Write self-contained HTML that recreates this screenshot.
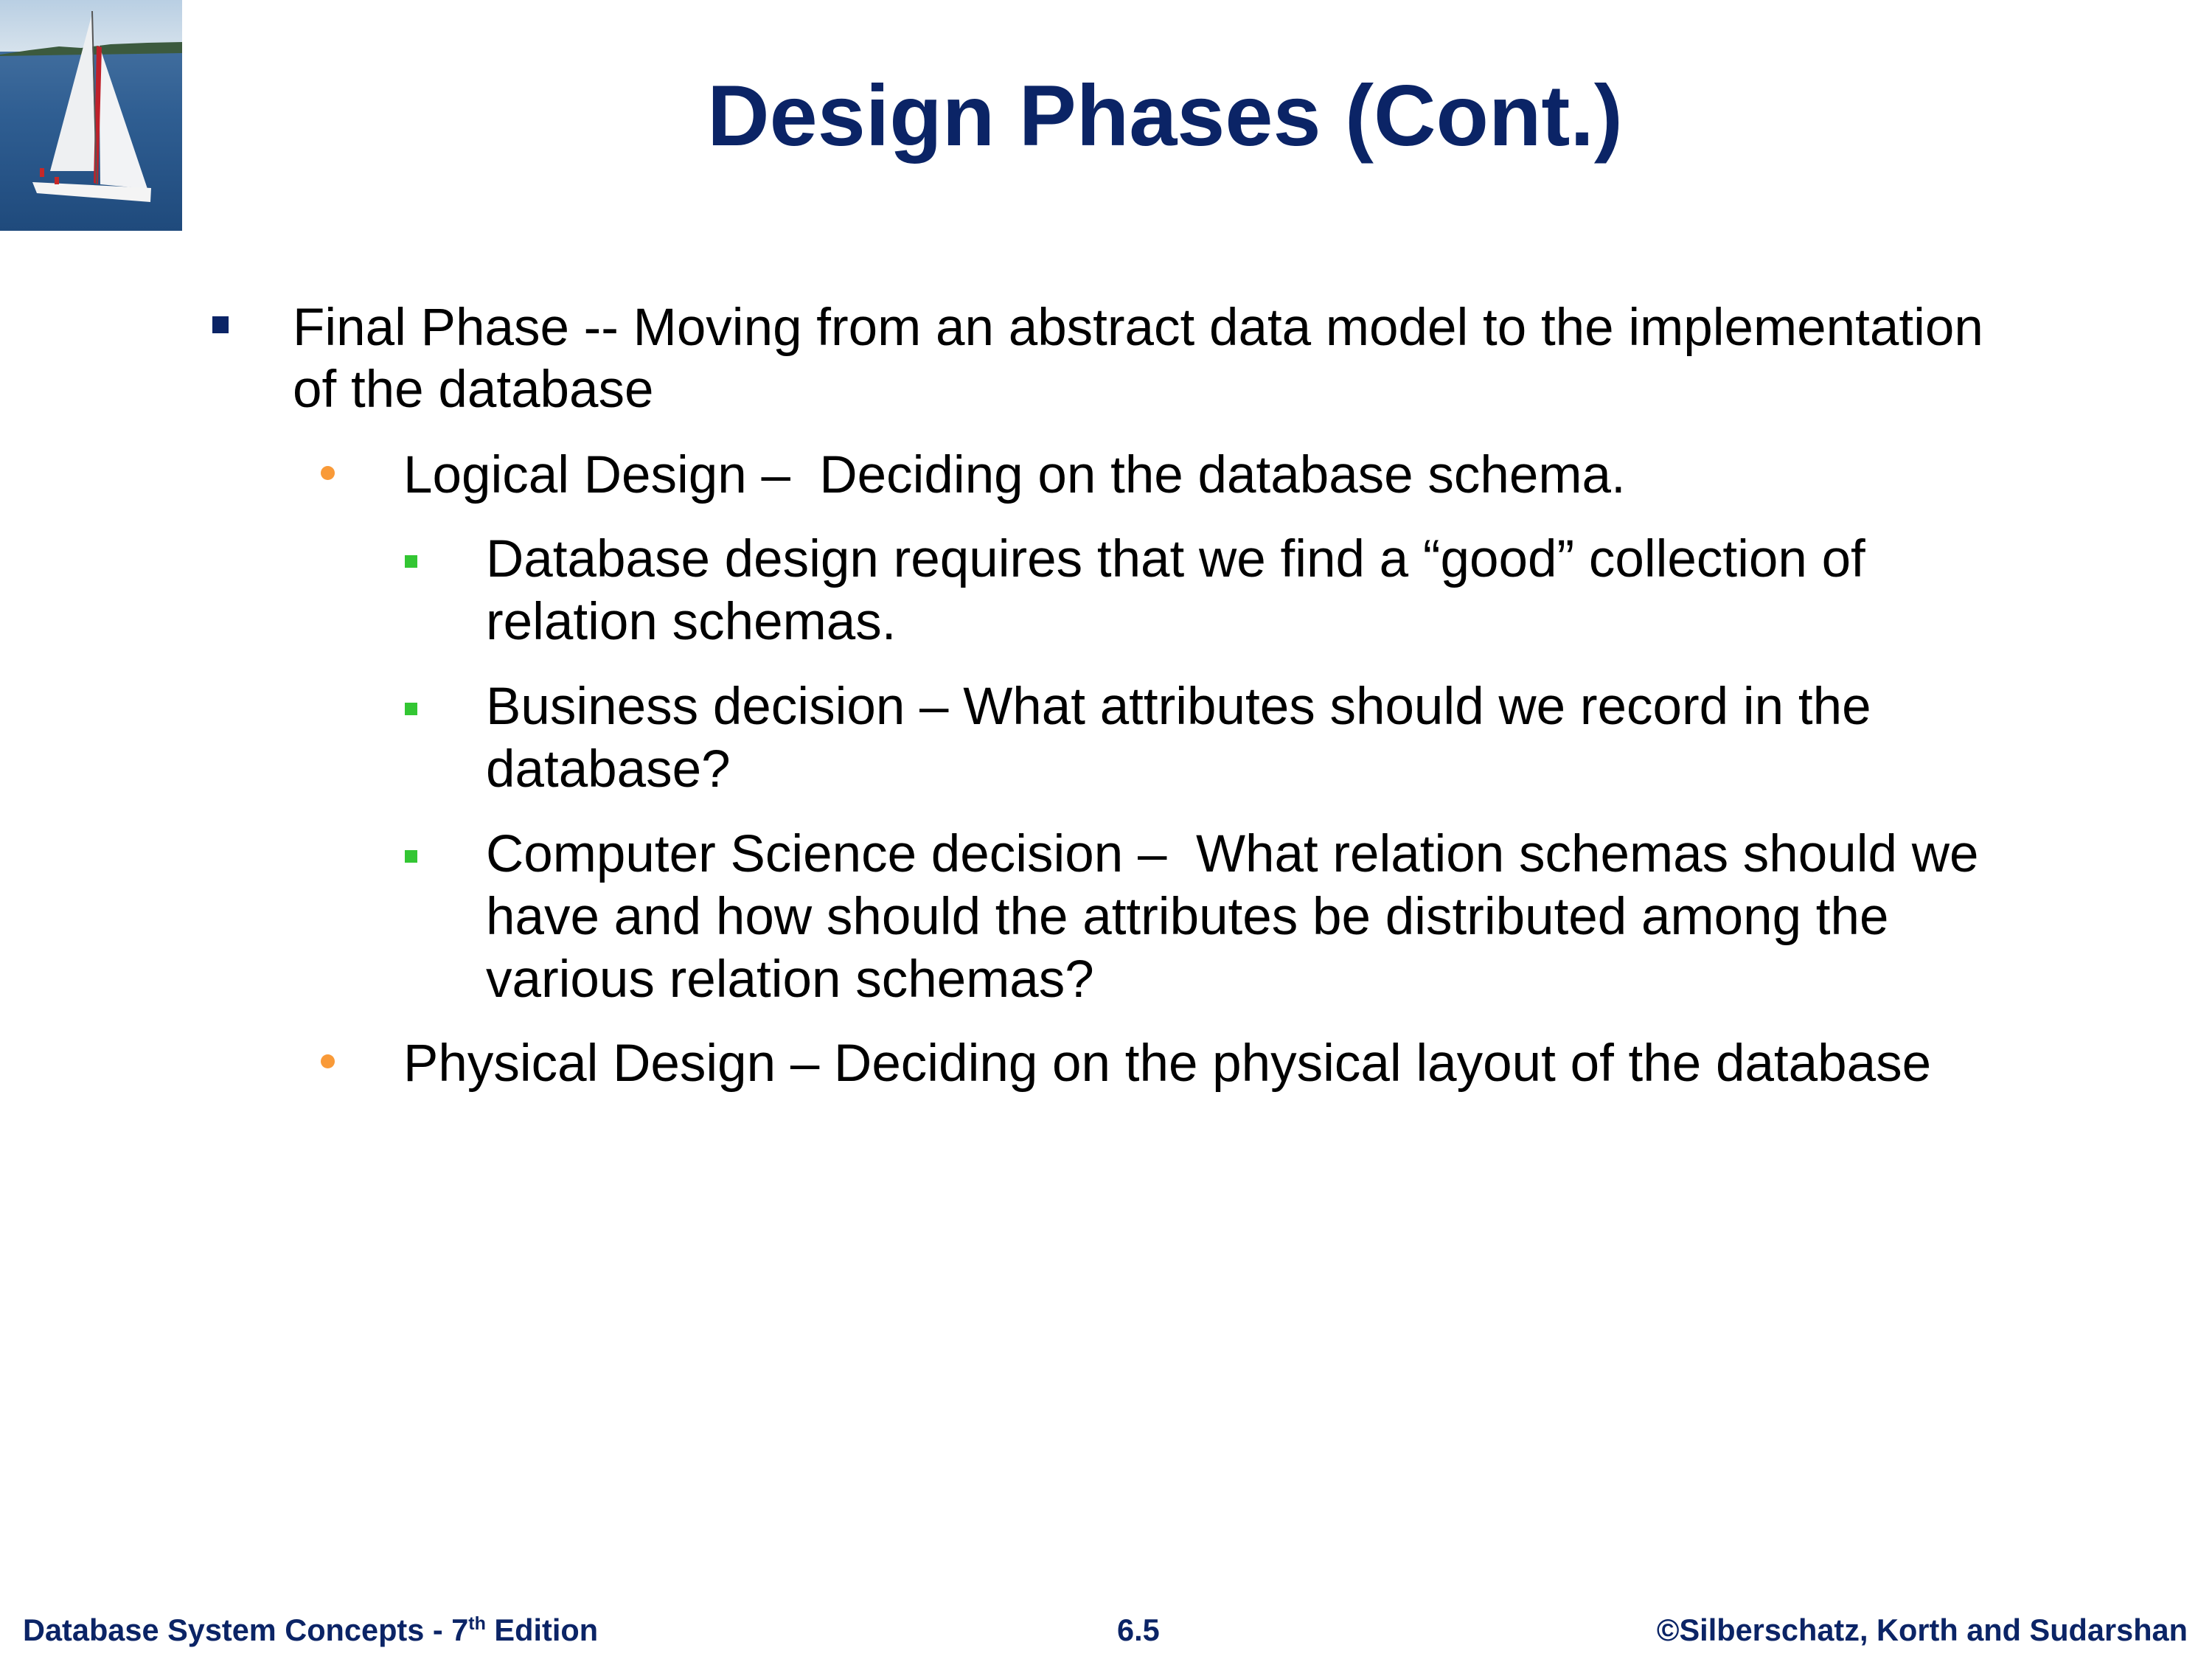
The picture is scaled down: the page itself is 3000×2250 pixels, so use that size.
<!DOCTYPE html>
<html><head><meta charset="utf-8"><style>
body{margin:0;width:3000px;height:2250px;background:#fff;position:relative;overflow:hidden;font-family:"Liberation Sans",sans-serif;}
.t{position:absolute;font-size:71px;line-height:70px;white-space:nowrap;color:#000;}
.b{position:absolute;}
.f{position:absolute;font-weight:bold;font-size:41.5px;line-height:40px;color:#0b2466;white-space:nowrap;top:2191px;}
</style></head><body>
<svg style="position:absolute;left:0;top:0" width="247" height="313" viewBox="0 0 247 313">
<defs><linearGradient id="sky" x1="0" y1="0" x2="0" y2="1"><stop offset="0" stop-color="#b9cfe3"/><stop offset="1" stop-color="#d6e2ec"/></linearGradient>
<linearGradient id="sea" x1="0" y1="0" x2="0" y2="1"><stop offset="0" stop-color="#4d78a6"/><stop offset="0.5" stop-color="#2f5e92"/><stop offset="1" stop-color="#1f4a7c"/></linearGradient></defs>
<rect width="247" height="313" fill="url(#sea)"/>
<rect width="247" height="70" fill="url(#sky)"/>
<path d="M0 74 L40 68 L80 63 L110 65 L150 60 L200 58 L247 57 L247 72 L0 76Z" fill="#3c5a3e"/>
<path d="M124 22 L68 232 L130 232Z" fill="#eef0f2"/>
<path d="M134 60 L136 250 L200 256Z" fill="#f2f3f5"/>
<path d="M131 62 L138 64 L133 250 L127 248Z" fill="#c0202a"/>
<line x1="125" y1="15" x2="131" y2="250" stroke="#555" stroke-width="2"/>
<path d="M44 247 L205 255 L204 274 L50 262 Z" fill="#f4f4f4"/>
<rect x="54" y="228" width="6" height="12" fill="#c62828"/><rect x="74" y="240" width="6" height="10" fill="#c62828"/>
</svg>
<div style="position:absolute;left:0;width:3160px;text-align:center;top:98px;font-size:117px;line-height:117px;font-weight:bold;color:#0b2466;white-space:nowrap">Design Phases (Cont.)</div>

<div class="b" style="left:288px;top:429px;width:22px;height:23px;background:#0b2466"></div>
<div class="t" style="left:397px;top:410px">Final Phase -- Moving from an abstract data model to the implementation</div>
<div class="t" style="left:397px;top:494px">of the database</div>

<div class="b" style="left:435px;top:632px;width:19px;height:19px;border-radius:50%;background:#f99a38"></div>
<div class="t" style="left:547px;top:610px">Logical Design –&nbsp; Deciding on the database schema.</div>

<div class="b" style="left:549px;top:753px;width:17px;height:17px;background:#33c633"></div>
<div class="t" style="left:659px;top:724px">Database design requires that we find a “good” collection of</div>
<div class="t" style="left:659px;top:809px">relation schemas.</div>

<div class="b" style="left:549px;top:953px;width:17px;height:17px;background:#33c633"></div>
<div class="t" style="left:659px;top:924px">Business decision – What attributes should we record in the</div>
<div class="t" style="left:659px;top:1009px">database?</div>

<div class="b" style="left:549px;top:1153px;width:17px;height:17px;background:#33c633"></div>
<div class="t" style="left:659px;top:1124px">Computer Science decision –&nbsp; What relation schemas should we</div>
<div class="t" style="left:659px;top:1209px">have and how should the attributes be distributed among the</div>
<div class="t" style="left:659px;top:1294px">various relation schemas?</div>

<div class="b" style="left:435px;top:1430px;width:19px;height:19px;border-radius:50%;background:#f99a38"></div>
<div class="t" style="left:547px;top:1408px">Physical Design – Deciding on the physical layout of the database</div>

<div class="f" style="left:31px">Database System Concepts - 7<sup style="font-size:25px;line-height:0;vertical-align:15px">th</sup> Edition</div>
<div class="f" style="left:1515px">6.5</div>
<div class="f" style="right:33px">©Silberschatz, Korth and Sudarshan</div>
</body></html>
